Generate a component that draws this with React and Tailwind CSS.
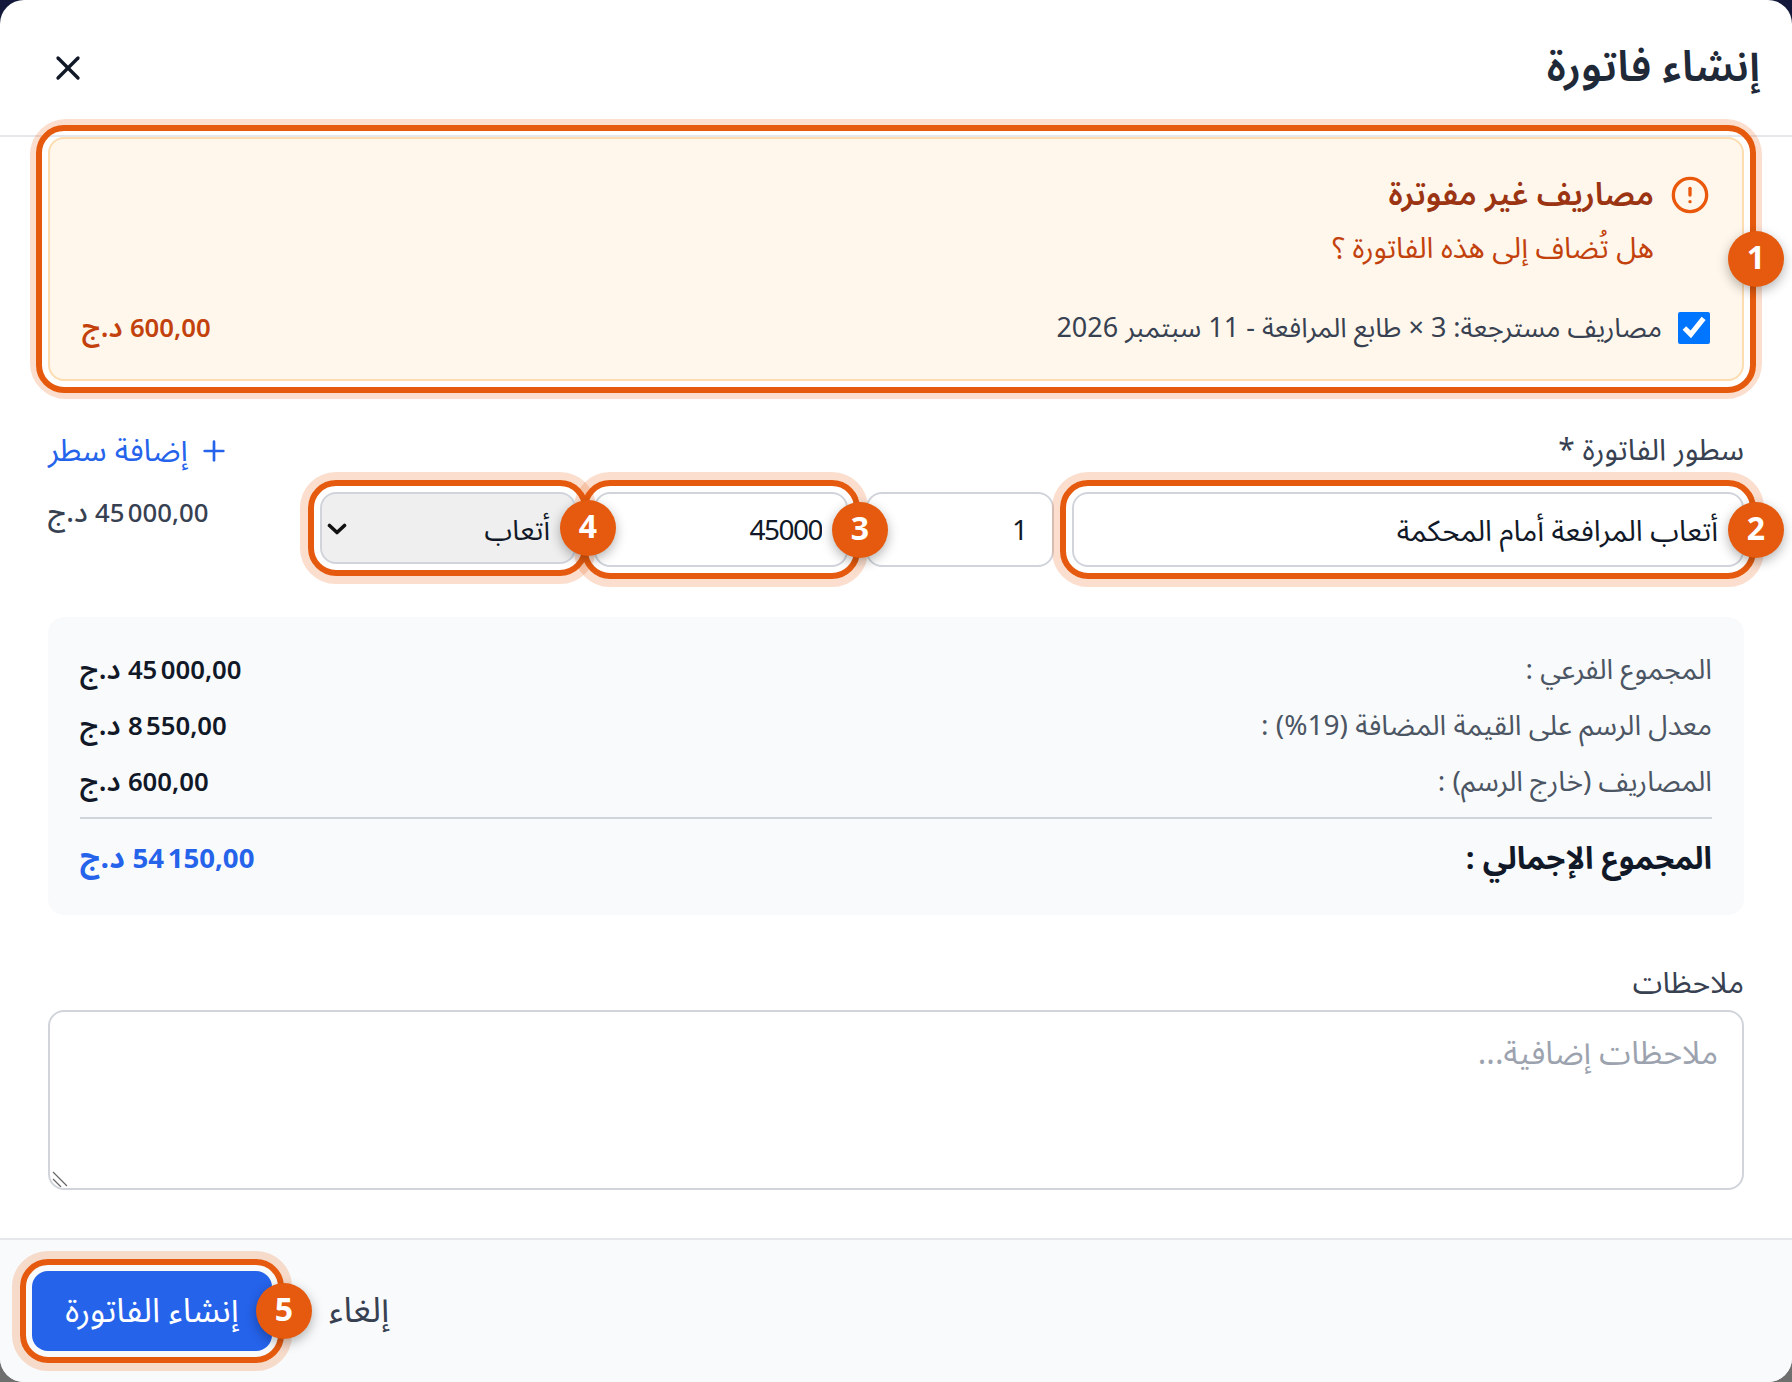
import React from "react";
import { CircleAlert, Plus, X } from "lucide-react";

const RING = "relative rounded-2xl outline-[6px] outline-offset-[6px] outline-[#e55a0e] before:absolute before:-inset-[20px] before:rounded-[36px] before:border-8 before:border-[#ea580c33] before:pointer-events-none";
const FIELD = "h-full w-full rounded-2xl border-2 border-[#d1d5db] px-6 pt-1 text-[#111827]";
const NNBSP = "\u202f";

function Badge({ n, className }) {
  return (
    <span className={`absolute z-10 flex h-14 w-14 items-center justify-center rounded-full bg-[#e55a0e] text-[32px] font-bold text-white shadow-[0_4px_12px_rgba(0,0,0,0.3)] ${className}`}>
      {n}
    </span>
  );
}

function Amount({ value }) {
  return (
    <>
      <span className="text-[0.92em]">{value}</span> د.ج
    </>
  );
}

function SumRow({ label, value }) {
  return (
    <div className="flex items-center justify-between text-[28px] leading-[44px]">
      <span className="text-[#4b5563]">{label}</span>
      <span className="font-semibold text-[#111827]">
        <Amount value={value} />
      </span>
    </div>
  );
}

export default function App() {
  return (
    <div dir="rtl" className="h-[1382px] w-[1792px] overflow-hidden bg-linear-to-b from-[#14183a] to-[#6f6f6f] font-['Noto_Sans_Arabic','Noto_Sans',sans-serif]">
      <div className="flex h-full flex-col overflow-hidden rounded-[24px] bg-white">
        <header className="flex h-[137px] shrink-0 items-center justify-between border-b-2 border-[#e5e7eb] px-8">
          <h2 className="pt-[2px] text-[43px] font-semibold text-[#1f2937]">إنشاء فاتورة</h2>
          <button className="flex h-[72px] w-[72px] items-center justify-center text-[#111827]">
            <X size={40} />
          </button>
        </header>

        <main className="flex-1 px-12">
          <section className={`h-[244px] border-2 border-[#fddcb0] bg-[#fff7eb] p-8 ${RING}`}>
            <Badge n="1" className="-right-[42px] top-[92px]" />
            <div className="flex gap-4">
              <CircleAlert size={40} className="mt-1 shrink-0 text-[#ea580c]" />
              <div>
                <h3 className="text-[32px] font-semibold leading-[48px] text-[#9a3412]">مصاريف غير مفوترة</h3>
                <p className="mt-[10px] text-[29px] leading-10 text-[#c2410c]">هل تُضاف إلى هذه الفاتورة ؟</p>
              </div>
            </div>
            <div className="mt-[37px] flex items-center justify-between">
              <label className="flex items-center gap-4 text-[27px] leading-10 text-[#374151]">
                <input type="checkbox" defaultChecked className="h-8 w-8" />
                <span className="pt-[2px]">مصاريف مسترجعة: 3 × طابع المرافعة - 11 سبتمبر 2026</span>
              </label>
              <span className="pt-[2px] text-[28px] font-semibold text-[#c2410c]">
                <Amount value="600,00" />
              </span>
            </div>
          </section>

          <div className="mt-[50px] flex items-center justify-between text-[31px] leading-10">
            <span className="text-[30px] text-[#374151]">سطور الفاتورة *</span>
            <button className="flex items-center gap-2.5 text-[#2563eb]">
              <Plus size={32} />
              إضافة سطر
            </button>
          </div>

          <div className="mt-[21px] flex items-start gap-[18px]">
            <div className={`h-[75px] w-[672px] ${RING}`}>
              <input readOnly value="أتعاب المرافعة أمام المحكمة" className={`${FIELD} text-[29px]`} />
              <Badge n="2" className="-right-10 top-[10px]" />
            </div>
            <div className="h-[75px] w-[188px]">
              <input readOnly value="1" className={`${FIELD} text-[28px]`} />
            </div>
            <div className={`h-[75px] w-[254px] ${RING}`}>
              <input readOnly value="45000" className={`${FIELD} text-[28px] tracking-[-1.5px]`} />
              <Badge n="3" className="-right-10 top-[10px]" />
            </div>
            <div className={`h-[72px] w-[256px] ${RING}`}>
              <select className="h-full w-full appearance-none rounded-2xl border-2 border-[#d1d5db] bg-[#efefef] px-6 pt-2 text-[28px] text-[#111827]">
                <option>أتعاب</option>
              </select>
              <svg className="absolute left-[7px] top-[31px] h-3 w-5" viewBox="0 0 20 12" fill="none" stroke="#111111" strokeWidth="3.6" strokeLinecap="round" strokeLinejoin="round">
                <path d="M2.5 2.5L10 9.5L17.5 2.5" />
              </svg>
              <Badge n="4" className="-right-10 top-2" />
            </div>
            <div className="flex-1 text-left text-[28px] font-medium leading-[44px] text-[#374151]">
              <Amount value={`45${NNBSP}000,00`} />
            </div>
          </div>

          <section className="mt-[50px] flex flex-col gap-3 rounded-2xl bg-[#f9fafb] p-8">
            <SumRow label="المجموع الفرعي :" value={`45${NNBSP}000,00`} />
            <SumRow label="معدل الرسم على القيمة المضافة (19%) :" value={`8${NNBSP}550,00`} />
            <SumRow label="المصاريف (خارج الرسم) :" value="600,00" />
            <div className="flex items-center justify-between border-t-2 border-[#d1d5db] pt-4 text-[30px] font-bold leading-[48px]">
              <span className="text-[31px] text-[#111827]">المجموع الإجمالي :</span>
              <span className="text-[#2563eb]">
                <Amount value={`54${NNBSP}150,00`} />
              </span>
            </div>
          </section>

          <label className="mt-[49px] block text-[30px] leading-10 text-[#374151]">ملاحظات</label>
          <div className="relative mt-[6px]">
            <textarea placeholder="ملاحظات إضافية..." className="block h-[180px] w-full resize-none rounded-2xl border-2 border-[#d1d5db] px-6 py-[22px] text-[32px] leading-10 placeholder:text-[#9ca3af]" />
            <svg className="absolute bottom-[3px] left-1 h-4 w-4 text-[#666666]" viewBox="0 0 16 16" fill="none" stroke="currentColor" strokeWidth="1.2">
              <path d="M1 1l14 14M1 8l8 8" />
            </svg>
          </div>
        </main>

        <footer className="flex h-[144px] shrink-0 items-center justify-end gap-[57px] border-t-2 border-[#e5e7eb] bg-[#f9fafb] px-8">
          <button className="text-[35px] text-[#374151]">إلغاء</button>
          <button className={`h-20 w-60 bg-[#2563eb] text-[34px] text-white ${RING}`}>
            إنشاء الفاتورة
            <Badge n="5" className="-right-10 top-3" />
          </button>
        </footer>
      </div>
    </div>
  );
}
